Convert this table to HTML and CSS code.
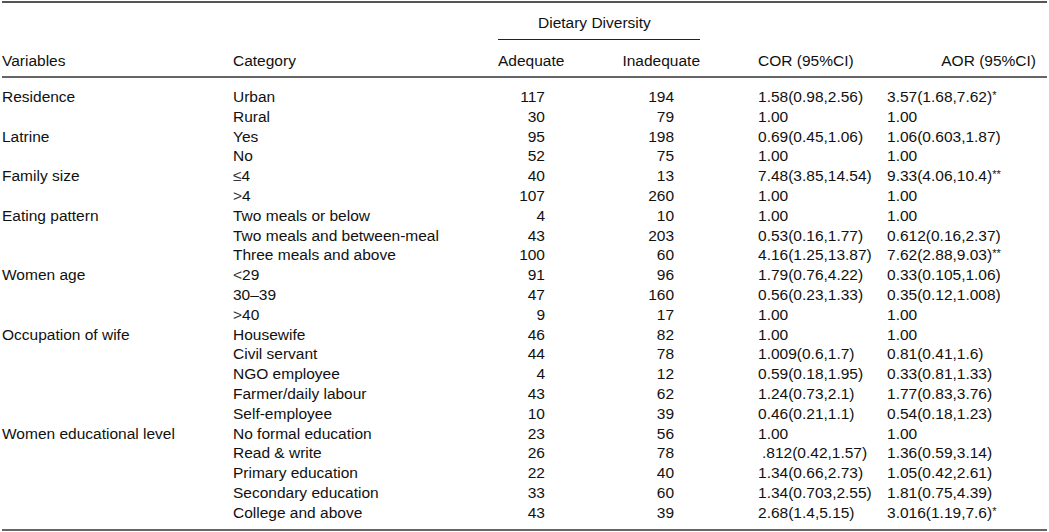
FILE: index.html
```html
<!DOCTYPE html>
<html>
<head>
<meta charset="utf-8">
<link rel="stylesheet" href="styles.css">
</head>
<body>
<table class="tbl">
  <colgroup>
    <col class="c-var"><col class="c-cat"><col class="c-ad"><col class="c-in"><col class="c-cor"><col class="c-aor">
  </colgroup>
  <thead>
    <tr class="h1">
      <th rowspan="2" class="hv">Variables</th>
      <th rowspan="2" class="hv">Category</th>
      <th colspan="2" class="dd"><span class="dd-text">Dietary Diversity</span></th>
      <th rowspan="2" class="hv hcor">COR (95%CI)</th>
      <th rowspan="2" class="hv haor">AOR (95%CI)</th>
    </tr>
    <tr class="h2">
      <th class="had">Adequate</th>
      <th class="hin">Inadequate</th>
    </tr>
  </thead>
  <tbody>
    <tr><td>Residence</td><td>Urban</td><td class="n1">117</td><td class="n2">194</td><td class="cor">1.58(0.98,2.56)</td><td class="aor">3.57(1.68,7.62)<span class="sig">*</span></td></tr>
    <tr><td></td><td>Rural</td><td class="n1">30</td><td class="n2">79</td><td class="cor">1.00</td><td class="aor">1.00</td></tr>
    <tr><td>Latrine</td><td>Yes</td><td class="n1">95</td><td class="n2">198</td><td class="cor">0.69(0.45,1.06)</td><td class="aor">1.06(0.603,1.87)</td></tr>
    <tr><td></td><td>No</td><td class="n1">52</td><td class="n2">75</td><td class="cor">1.00</td><td class="aor">1.00</td></tr>
    <tr><td>Family size</td><td><span class="op">≤</span>4</td><td class="n1">40</td><td class="n2">13</td><td class="cor">7.48(3.85,14.54)</td><td class="aor">9.33(4.06,10.4)<span class="sig">**</span></td></tr>
    <tr><td></td><td><span class="op">&gt;</span>4</td><td class="n1">107</td><td class="n2">260</td><td class="cor">1.00</td><td class="aor">1.00</td></tr>
    <tr><td>Eating pattern</td><td>Two meals or below</td><td class="n1">4</td><td class="n2">10</td><td class="cor">1.00</td><td class="aor">1.00</td></tr>
    <tr><td></td><td>Two meals and between-meal</td><td class="n1">43</td><td class="n2">203</td><td class="cor">0.53(0.16,1.77)</td><td class="aor">0.612(0.16,2.37)</td></tr>
    <tr><td></td><td>Three meals and above</td><td class="n1">100</td><td class="n2">60</td><td class="cor">4.16(1.25,13.87)</td><td class="aor">7.62(2.88,9.03)<span class="sig">**</span></td></tr>
    <tr><td>Women age</td><td><span class="op">&lt;</span>29</td><td class="n1">91</td><td class="n2">96</td><td class="cor">1.79(0.76,4.22)</td><td class="aor">0.33(0.105,1.06)</td></tr>
    <tr><td></td><td>30–39</td><td class="n1">47</td><td class="n2">160</td><td class="cor">0.56(0.23,1.33)</td><td class="aor">0.35(0.12,1.008)</td></tr>
    <tr><td></td><td><span class="op">&gt;</span>40</td><td class="n1">9</td><td class="n2">17</td><td class="cor">1.00</td><td class="aor">1.00</td></tr>
    <tr><td>Occupation of wife</td><td>Housewife</td><td class="n1">46</td><td class="n2">82</td><td class="cor">1.00</td><td class="aor">1.00</td></tr>
    <tr><td></td><td>Civil servant</td><td class="n1">44</td><td class="n2">78</td><td class="cor">1.009(0.6,1.7)</td><td class="aor">0.81(0.41,1.6)</td></tr>
    <tr><td></td><td>NGO employee</td><td class="n1">4</td><td class="n2">12</td><td class="cor">0.59(0.18,1.95)</td><td class="aor">0.33(0.81,1.33)</td></tr>
    <tr><td></td><td>Farmer/daily labour</td><td class="n1">43</td><td class="n2">62</td><td class="cor">1.24(0.73,2.1)</td><td class="aor">1.77(0.83,3.76)</td></tr>
    <tr><td></td><td>Self-employee</td><td class="n1">10</td><td class="n2">39</td><td class="cor">0.46(0.21,1.1)</td><td class="aor">0.54(0.18,1.23)</td></tr>
    <tr><td>Women educational level</td><td>No formal education</td><td class="n1">23</td><td class="n2">56</td><td class="cor">1.00</td><td class="aor">1.00</td></tr>
    <tr><td></td><td>Read &amp; write</td><td class="n1">26</td><td class="n2">78</td><td class="cor ind">.812(0.42,1.57)</td><td class="aor">1.36(0.59,3.14)</td></tr>
    <tr><td></td><td>Primary education</td><td class="n1">22</td><td class="n2">40</td><td class="cor">1.34(0.66,2.73)</td><td class="aor">1.05(0.42,2.61)</td></tr>
    <tr><td></td><td>Secondary education</td><td class="n1">33</td><td class="n2">60</td><td class="cor">1.34(0.703,2.55)</td><td class="aor">1.81(0.75,4.39)</td></tr>
    <tr><td></td><td>College and above</td><td class="n1">43</td><td class="n2">39</td><td class="cor">2.68(1.4,5.15)</td><td class="aor">3.016(1.19,7.6)<span class="sig">*</span></td></tr>
  </tbody>
</table>
</body>
</html>
```

FILE: styles.css
```css
html, body {
  margin: 0;
  padding: 0;
  background: #ffffff;
}

body {
  padding: 1px 2px 0 2px;
  font-family: "Liberation Sans", Arial, Helvetica, sans-serif;
  font-size: 15.5px;
  color: #111;
}

.tbl {
  width: 1045px;
  border-collapse: separate;
  border-spacing: 0;
  table-layout: fixed;
  border-top: 2px solid #555;
  border-bottom: 2px solid #666;
}

.c-var { width: 231px; }
.c-cat { width: 265px; }
.c-ad { width: 102px; }
.c-in { width: 100px; }
.c-cor { width: 180px; }
.c-aor { width: 167px; }

th, td {
  padding: 0;
  font-weight: normal;
  text-align: left;
  line-height: 19.8px;
  white-space: nowrap;
}

th {
  line-height: 20px;
}

.h1 th.dd {
  padding: 10px 0 6px 0;
  border-bottom: 1px solid #222;
  vertical-align: top;
}

.dd-text {
  padding-left: 40px;
}

.hv {
  vertical-align: bottom;
  padding-bottom: 5px;
  border-bottom: 2px solid #666;
}

.h2 th {
  padding: 11px 0 5px 0;
  border-bottom: 2px solid #666;
}

.had { text-align: left; }
.hin { text-align: right; }

.hcor { padding-left: 58px; }
.haor { text-align: right; padding-right: 11px; }

tbody tr:first-child td { padding-top: 9px; }
tbody tr:last-child td { padding-bottom: 6px; }

.n1 { text-align: right; padding-right: 55px; }
.n2 { text-align: right; padding-right: 26px; }

.cor { padding-left: 58px; }
.cor.ind { padding-left: 62px; }
.aor { padding-left: 7px; }

.sig {
  font-size: 11px;
  vertical-align: 3px;
  line-height: 0;
}

.op {
  font-weight: 300;
  color: #333;
}
```
